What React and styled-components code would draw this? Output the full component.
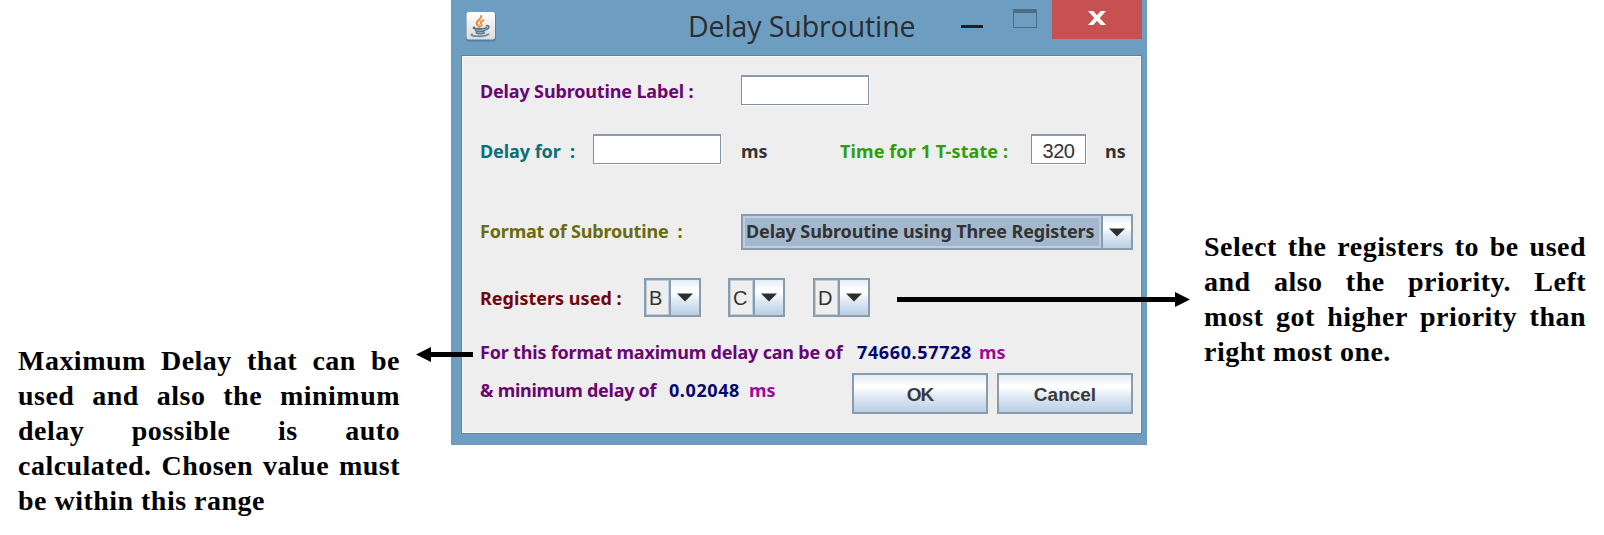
import React from 'react';
import styled, { createGlobalStyle } from 'styled-components';

const GlobalStyle = createGlobalStyle`
  body { margin: 0; background: #fff; }
  *, *::before, *::after { box-sizing: border-box; }
`;

const Page = styled.main`
  position: relative;
  display: flex;
  align-items: flex-start;
  width: 1604px;
  height: 535px;
  overflow: hidden;
`;

const Note = styled.p`
  flex: none;
  width: 382px;
  margin: ${(p) => p.$margin};
  font: bold 28px/35px 'Liberation Serif', serif;
  letter-spacing: 0.48px;
  text-align: justify;
  color: #000;
`;

const Window = styled.section`
  flex: none;
  width: 696px;
  height: 445px;
  padding: 0 5px 11px 10px;
  background: #6d9dc0;
`;

const TitleBar = styled.header`
  display: flex;
  align-items: flex-start;
  height: 55px;
`;

const AppIcon = styled.svg`
  flex: none;
  width: 32px;
  height: 32px;
  margin: 11px 0 0 4px;
`;

const Title = styled.h1`
  flex: none;
  width: 269px;
  margin: 6px 0 0 191px;
  font: 400 28.5px/40px 'Open Sans', sans-serif;
  letter-spacing: -0.1px;
  white-space: nowrap;
  color: #2b2d30;
`;

const MinimizeMark = styled.span`
  flex: none;
  width: 22px;
  height: 3px;
  margin: 25px 30px 0 4px;
  background: #1f1f1f;
`;

const MaximizeMark = styled.span`
  flex: none;
  width: 24px;
  height: 19px;
  margin: 9px 15px 0 0;
  border: 1.5px solid #4d6d83;
  border-top-width: 4px;
`;

const CloseButton = styled.button`
  flex: none;
  display: flex;
  justify-content: center;
  width: 90px;
  height: 39px;
  padding: 11px 1px 0 0;
  border: 0;
  background: #c75050;
`;

const Body = styled.div`
  height: 379px;
  padding: 18px 6px 0 18px;
  border: 1px solid #5d86a6;
  box-shadow: inset 0 0 0 1px #f8f8f8;
  background: #eee;
`;

const Row = styled.div`
  display: flex;
  align-items: center;
  height: ${(p) => p.$height}px;
  margin-top: ${(p) => p.$gap || 0}px;
`;

const Label = styled.span`
  flex: none;
  width: ${(p) => p.$width}px;
  margin-left: ${(p) => p.$before || 0}px;
  padding: ${(p) => p.$nudge || 0}px 0 ${(p) => p.$lift || 0}px;
  font: bold 18px/24px 'Noto Sans', sans-serif;
  letter-spacing: ${(p) => p.$tracking || 0}px;
  white-space: pre;
  color: ${(p) => p.$color || '#333'};
`;

const Field = styled.input`
  flex: none;
  width: ${(p) => p.$width}px;
  height: 30px;
  margin: 0;
  padding: 3px 0 0;
  border: 1.5px solid #7f90a1;
  border-top: 2px solid #8b9bab;
  border-radius: 0;
  outline: 0;
  background: #fff;
  box-shadow: 1px 1px 0 #fff;
  font: 20px/24px 'Liberation Sans', sans-serif;
  letter-spacing: -0.5px;
  text-align: center;
  color: #333;
`;

const Combo = styled.div`
  flex: none;
  display: flex;
  width: ${(p) => p.$width}px;
  height: 100%;
  margin-right: ${(p) => p.$after || 0}px;
  border: 2px solid #8a9bab;
`;

const ComboValue = styled.span`
  flex: 1;
  min-width: 0;
  padding-left: ${(p) => (p.$selected ? 1 : 2)}px;
  border: ${(p) => (p.$selected ? 2 : 1)}px solid #b9cee3;
  background: ${(p) => (p.$selected ? '#a3b8cc' : '#eee')};
  font: ${(p) =>
    p.$selected ? "bold 18px/26px 'Noto Sans', sans-serif" : "20px/34px 'Liberation Sans', sans-serif"};
  letter-spacing: ${(p) => (p.$selected ? '-0.115px' : '0')};
  white-space: nowrap;
  color: #333;
`;

const ComboArrow = styled.span`
  flex: none;
  display: flex;
  align-items: center;
  justify-content: center;
  width: 30px;
  border-left: 2px solid #8a9bab;
  background: linear-gradient(#e3edf6 0%, #fff 30%, #fff 36%, #dfe9f4 60%, #b8cfe5 100%);
`;

const PushButton = styled.button`
  flex: none;
  width: 136px;
  height: 41px;
  margin: 0 0 0 ${(p) => p.$before}px;
  padding: 3px 0 0;
  border: 2px solid #8a9bab;
  border-radius: 0;
  background: linear-gradient(#e3edf6 0%, #fff 30%, #fff 34%, #dfe9f4 58%, #b8cfe5 100%);
  font: bold 19px/24px 'Liberation Sans', sans-serif;
  letter-spacing: ${(p) => p.$tracking}px;
  color: #3a3a3a;
`;

const Pointer = styled.svg`
  position: absolute;
  left: ${(p) => p.$x}px;
  top: ${(p) => p.$y}px;
  overflow: visible;
`;

function JavaCup() {
  return (
    <AppIcon viewBox="0 0 32 32" aria-label="Java">
      <defs>
        <linearGradient id="tile" x1="0" y1="0" x2="0" y2="1">
          <stop offset="0" stopColor="#fff" />
          <stop offset="1" stopColor="#dcdcdc" />
        </linearGradient>
      </defs>
      <rect x="1" y="2" width="30" height="28.5" rx="3" fill="#4e7590" opacity="0.75" />
      <rect x="1.5" y="1" width="28.5" height="27.5" rx="2.5" fill="url(#tile)" />
      <g fill="none" strokeLinecap="round">
        <path d="M16.2 5.2c.6 3.2-4.8 4-4.6 7 .1 1.5 1.7 2.2 2.6 3.5" stroke="#ee8a35" strokeWidth="2.2" />
        <path d="M18.5 9.3c-3.5 1.2-3.2 2.4-2 3.8.5.9 0 1.7-.8 2.4" stroke="#ee8a35" strokeWidth="1.8" />
        <path d="M9.2 16.4c-2 .9 1 1.500 5.500 1.500s6-.5 6.500-1" stroke="#55768f" strokeWidth="2" />
        <path d="M21.500 14.800c3.200-.8 3.200 2.700-.3 3.900" stroke="#55768f" strokeWidth="1.700" />
        <path d="M10.600 19.500c0 1 8 1.200 9 .2M11.400 21.800c1 1 6.500 1 7.800.2" stroke="#55768f" strokeWidth="1.800" />
        <path d="M7 23.200c-4 2.200 13 3.200 16.500 0" stroke="#6c8ba2" strokeWidth="1.800" />
      </g>
    </AppIcon>
  );
}

function Select({ value, width, after, selected }) {
  return (
    <Combo $width={width} $after={after}>
      <ComboValue $selected={selected}>{value}</ComboValue>
      <ComboArrow>
        <svg width="16" height="9" viewBox="0 0 16 9">
          <path d="M0 0.500H16L8 8.500Z" fill="#2e2e2e" />
        </svg>
      </ComboArrow>
    </Combo>
  );
}

export default function App() {
  return (
    <Page>
      <GlobalStyle />
      <Note $margin="343px 51px 0 18px">
        Maximum Delay that can be used and also the minimum delay possible is auto calculated. Chosen value must be
        within this range
      </Note>

      <Window>
        <TitleBar>
          <JavaCup />
          <Title>Delay Subroutine</Title>
          <MinimizeMark />
          <MaximizeMark />
          <CloseButton aria-label="Close">
            <svg width="18" height="14" viewBox="0 0 18 14">
              <path d="M0 0H5.300L9 4.200L12.700 0H18L11.700 7L18 14H12.700L9 9.800L5.300 14H0L6.300 7Z" fill="#fff" />
            </svg>
          </CloseButton>
        </TitleBar>

        <Body>
          <Row $height={30} $gap={1}>
            <Label $width={261} $nudge={2} $tracking={-0.152} $color="#6a0572">Delay Subroutine Label :</Label>
            <Field $width={128} aria-label="Delay Subroutine Label" />
          </Row>

          <Row $height={30} $gap={29}>
            <Label $width={113} $nudge={4} $tracking={-0.06} $color="#0b7075">Delay for  :</Label>
            <Field $width={128} aria-label="Delay" />
            <Label $before={20} $width={99} $nudge={4}>ms</Label>
            <Label $width={191} $nudge={4} $tracking={0.108} $color="#2f9e0a">Time for 1 T-state :</Label>
            <Field $width={55} defaultValue="320" aria-label="Time for 1 T-state" />
            <Label $before={19} $width={21} $nudge={4}>ns</Label>
          </Row>

          <Row $height={36} $gap={50}>
            <Label $width={261} $lift={3} $tracking={-0.183} $color="#6b6b0c">Format of Subroutine  :</Label>
            <Select value="Delay Subroutine using Three Registers" width={392} selected />
          </Row>

          <Row $height={39} $gap={28}>
            <Label $width={164} $tracking={0.02} $color="#720508">Registers used :</Label>
            <Select value="B" width={57} after={27} />
            <Select value="C" width={57} after={28} />
            <Select value="D" width={57} />
          </Row>

          <Row $height={24} $gap={23}>
            <Label $width={377} $tracking={-0.19} $color="#6a0572">For this format maximum delay can be of</Label>
            <Label $width={122} $tracking={0.628} $color="#06066c">74660.57728</Label>
            <Label $width={40} $color="#9c0a9c">ms</Label>
          </Row>

          <Row $height={41} $gap={9}>
            <Label $width={189} $lift={7} $tracking={-0.27} $color="#6a0572">&amp; minimum delay of</Label>
            <Label $width={80} $lift={7} $tracking={0.577} $color="#06066c">0.02048</Label>
            <Label $width={40} $lift={7} $color="#9c0a9c">ms</Label>
            <PushButton $before={63} $tracking={-1}>OK</PushButton>
            <PushButton $before={9} $tracking={0}>Cancel</PushButton>
          </Row>
        </Body>
      </Window>

      <Note $margin="229px 0 0 57px">
        Select the registers to be used and also the priority. Left most got higher priority than right most one.
      </Note>

      <Pointer $x={416} $y={347} width="57" height="15" viewBox="0 0 57 15">
        <path d="M0 7.500L15 0V5H57V10H15V15Z" fill="#000" />
      </Pointer>
      <Pointer $x={897} $y={292} width="293" height="15" viewBox="0 0 293 15">
        <path d="M293 7.500L278 0V5H0V10H278V15Z" fill="#000" />
      </Pointer>
    </Page>
  );
}
